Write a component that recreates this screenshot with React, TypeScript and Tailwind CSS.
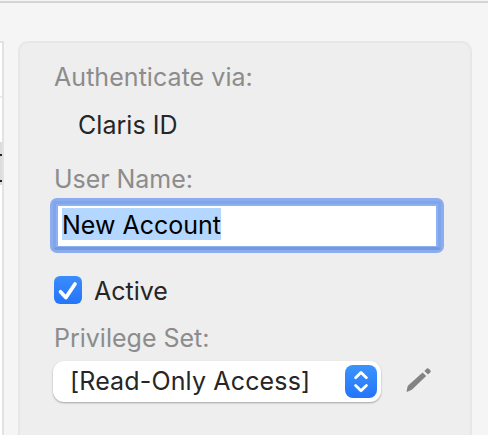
import React from 'react';

const AccountTable: React.FC = () => (
  <div className="w-1 shrink-0 mt-[38px] border-r-2 border-t-2 border-[#e2e2e2] bg-white">
    <div className="h-[55px] border-b-2 border-[#ececec]"></div>
    <div className="h-[44px]"></div>
    <div className="h-[43px] bg-[#dcdcdc] pt-[12px]">
      <div className="h-[28px] border-y-2 border-[#222222]"></div>
    </div>
  </div>
);

const Label: React.FC<{ className?: string; children: React.ReactNode }> = ({ className = '', children }) => (
  <div className={`text-[#8c8c8c] whitespace-nowrap leading-[32px] ${className}`}>{children}</div>
);

const PencilIcon = () => (
  <svg width="28" height="28" viewBox="0 0 28 28" fill="#838383">
    <path d="M1.6 25 L2.6 20.6 Q2.8 19.8 3.4 19.2 L17.6 6.4 L21.2 10 L7.4 23.2 Q6.9 23.7 6.2 23.9 L2.4 25.8 Q1.4 26 1.6 25 Z" />
    <path d="M19.4 4.9 L21.8 2.6 Q22.8 1.8 23.8 2.7 L25.3 4.2 Q26.2 5.2 25.3 6.2 L23 8.5 Z" />
  </svg>
);

export default function App() {
  return (
    <div className="flex flex-col w-[488px] h-[435px] overflow-hidden bg-[#f5f5f5] font-['Inter','Liberation_Sans',sans-serif] text-[25px] text-[#262626]">
      <div className="h-[3px] shrink-0 border-b-2 border-[#d5d5d5]"></div>
      <div className="flex flex-1 min-h-0">
        <AccountTable />

        <div className="ml-[14px] mt-[38px] w-[454px] h-[420px] shrink-0 rounded-[10px] border-2 border-[#e7e7e7] bg-[#eeeeee] pt-[18px] pl-[30px]">
          <Label className="ml-[4px] tracking-[0.05px]">Authenticate via:</Label>
          <div className="ml-[28px] mt-[16px] leading-[32px] whitespace-nowrap tracking-[0.05px]">Claris ID</div>
          <Label className="ml-[4px] mt-[22px] tracking-[-0.05px]">User Name:</Label>

          <div className="w-[394px] h-[55px] mt-[3px] rounded-[7px] border-[3px] border-[#8badee] bg-[#8badee]">
            <div className="h-full rounded-[3px] border-[3px] border-[#7fa5ec] border-b-[#7199dd] bg-[#8fb1f0] px-[2px] pt-[2px] pb-[1px]">
              <div className="flex h-full items-start bg-white pl-[4px] pt-[2px]">
                <span className="h-[32px] w-[159px] bg-[#b3d7ff] text-black leading-[34px] whitespace-nowrap">New Account</span>
              </div>
            </div>
          </div>

          <div className="flex items-center ml-[4px] mt-[22px] h-[29px]">
            <div className="w-[28px] h-[28px] rounded-[6px] bg-gradient-to-b from-[#3b8cfc] to-[#2475fa]">
              <svg width="28" height="28" viewBox="0 0 28 28" fill="none">
                <path d="M6.5 15.8 L11.8 21.6 L21 8" stroke="white" strokeWidth="3.7" strokeLinecap="round" strokeLinejoin="round" />
              </svg>
            </div>
            <span className="ml-[12px] mt-[2px] leading-[32px]">Active</span>
          </div>

          <Label className="ml-[4px] mt-[18px]">Privilege Set:</Label>

          <div className="flex items-center mt-[7px] ml-[3px]">
            <div className="flex items-center justify-between w-[328px] h-[41px] rounded-[11px] bg-white pl-[17px] pr-[4px] shadow-[0_1px_2px_rgba(0,0,0,0.32)]">
              <span className="-mt-[2px] leading-[32px] whitespace-nowrap tracking-[0.15px]">[Read-Only Access]</span>
              <div className="w-[32px] h-[33px] shrink-0 -mt-[1px] rounded-[8px] bg-gradient-to-b from-[#3c93fc] to-[#2475fa]">
                <svg width="32" height="33" viewBox="0 0 32 33" fill="none" stroke="white" strokeWidth="2.8" strokeLinecap="round" strokeLinejoin="round">
                  <path d="M10.6 12.8 L16 7.4 L21.4 12.8" />
                  <path d="M10.6 20.4 L16 25.8 L21.4 20.4" />
                </svg>
              </div>
            </div>
            <div className="ml-[24px] -mt-[3px]">
              <PencilIcon />
            </div>
          </div>
        </div>
      </div>
    </div>
  );
}
